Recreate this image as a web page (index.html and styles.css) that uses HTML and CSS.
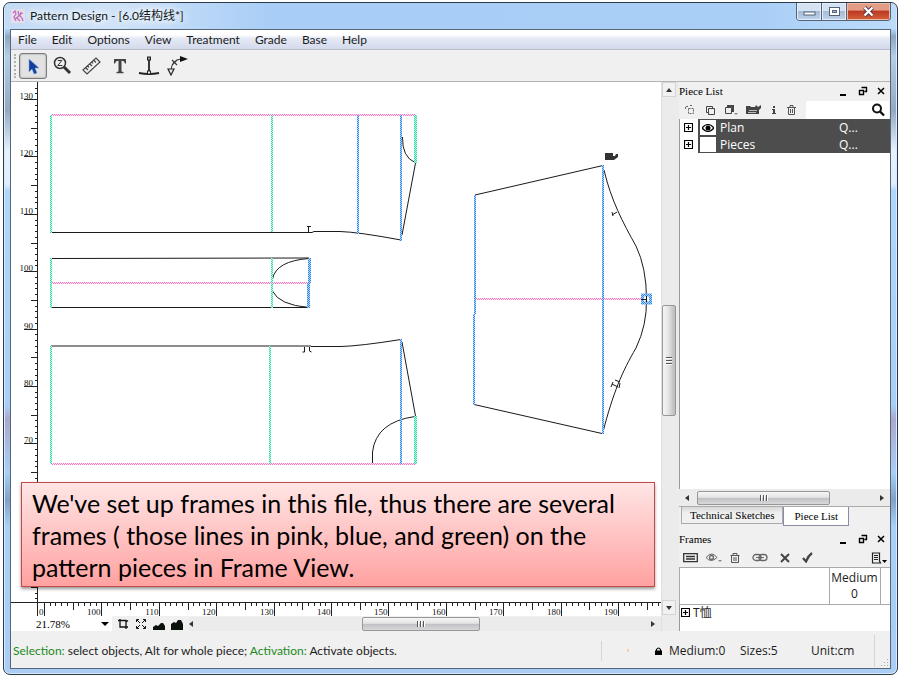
FILE: index.html
```html
<!DOCTYPE html>
<html lang="en">
<head>
<meta charset="utf-8">
<title>Pattern Design</title>
<link rel="stylesheet" href="styles.css">
</head>
<body>
<div class="window">
  <header class="titlebar">
    <svg class="app-icon" width="14" height="14" viewBox="0 0 14 14"><rect width="14" height="14" fill="#e6dfe9"/><path d="M2 4l2-2 1 3-2 3 2 4M7 2l1 4-2 3 3 3M10 3l-1 4 2 2 1 3M4 10l4-3M9 5l3-1" fill="none" stroke="#c071c0" stroke-width="1.300"/></svg>
    <h1 class="caption">Pattern Design - [6.0结构线*]</h1>
    <div class="window-buttons">
      <button class="wb" aria-label="Minimize"><svg width="13" height="10" viewBox="0 0 13 10"><rect x="1" y="5" width="11" height="3" fill="#fff" stroke="#53637a"/></svg></button>
      <button class="wb" aria-label="Maximize"><svg width="13" height="11" viewBox="0 0 13 11"><rect x="1.500" y="1.500" width="10" height="8" fill="#fff" stroke="#53637a"/><rect x="4.500" y="4.500" width="4" height="2" fill="#a9bed6" stroke="#53637a"/></svg></button>
      <button class="wb wb-close" aria-label="Close"><svg width="13" height="11" viewBox="0 0 13 11"><path d="M2.500 1.500l8 8M10.500 1.500l-8 8" stroke="#4b3440" stroke-width="4"/><path d="M2.500 1.500l8 8M10.500 1.500l-8 8" stroke="#fff" stroke-width="2.400"/></svg></button>
    </div>
  </header>

  <div class="client">
    <nav class="menubar">
      <button>File</button><button>Edit</button><button>Options</button><button>View</button><button>Treatment</button><button>Grade</button><button>Base</button><button>Help</button>
    </nav>

    <div class="toolbar">
      <span class="grip"></span>
      <button class="tool active" aria-label="Select"><svg width="20" height="20" viewBox="0 0 20 20"><path d="M6 3v13l3-3 2 5 3-1-2-5h4z" fill="#123f9c" stroke="#7fa3dc" stroke-width=".6"/></svg></button>
      <button class="tool" aria-label="Zoom"><svg width="20" height="20" viewBox="0 0 20 20"><circle cx="8" cy="7" r="5.500" fill="none" stroke="#333" stroke-width="1.500"/><path d="M5.800 4.500h4l-4 5h4.500" fill="none" stroke="#333"/><path d="M12 11l6 6" stroke="#333" stroke-width="3"/></svg></button>
      <button class="tool" aria-label="Measure"><svg width="20" height="20" viewBox="0 0 20 20"><path d="M2 14L15 2l4 4L6 18zM5 12l2 2M7 10l1 1.500M9 8l2 2M11 6l1 1.500M13 4.500l2 2" fill="none" stroke="#444" stroke-width="1.200"/></svg></button>
      <button class="tool" aria-label="Text"><svg width="20" height="20" viewBox="0 0 20 20"><path d="M4 3v4.500h1.200q.3-2.800 3.300-2.800V15.500L6.500 16v1.300h7V16l-2-.5V4.700q3 0 3.300 2.800H16V3z" fill="#444"/></svg></button>
      <button class="tool" aria-label="Perpendicular"><svg width="22" height="20" viewBox="0 0 22 20"><path d="M1 17q10 2 20 0" fill="none" stroke="#222" stroke-width="1.800"/><path d="M11 3v14" stroke="#222" stroke-width="1.800"/><rect x="9.500" y="1" width="3" height="3" fill="#999" stroke="#222"/><rect x="9.500" y="15" width="3" height="3" fill="#eee" stroke="#222"/></svg></button>
      <button class="tool" aria-label="Curve"><svg width="22" height="20" viewBox="0 0 22 20"><path d="M4 14Q5 4 14 3M5 4l5 5M10 4L5 9" fill="none" stroke="#333" stroke-width="1.100"/><path d="M13 0l8 3-8 3z" fill="#111"/><path d="M1 13h6l-3 6z" fill="#eee" stroke="#222" stroke-width="1.200"/></svg></button>
    </div>

    <main class="workspace">
      <section class="canvas-column">
        <div class="canvas">
          <svg class="drawing" width="100%" height="100%" aria-label="Pattern pieces">
            <defs>
              <pattern id="pink" width="2" height="2" patternUnits="userSpaceOnUse"><rect width="2" height="2" fill="#ffe6f5"/><path d="M0 0h1v1H0zM1 1h1v1H1z" fill="#ff78c4"/></pattern>
              <pattern id="blue" width="2" height="2" patternUnits="userSpaceOnUse"><rect width="2" height="2" fill="#b0d4fa"/><path d="M0 0h1v1H0zM1 1h1v1H1z" fill="#3488e4"/></pattern>
              <pattern id="green" width="2" height="2" patternUnits="userSpaceOnUse"><rect width="2" height="2" fill="#bcf9e4"/><path d="M0 0h1v1H0zM1 1h1v1H1z" fill="#36d8a6"/></pattern>
            </defs>
            <g transform="translate(-11 -82)">
              <g fill="url(#pink)">
                <rect x="51" y="114" width="365" height="2"/><rect x="52" y="282" width="257" height="2"/>
                <rect x="51" y="463" width="365" height="2"/><rect x="475" y="298" width="168" height="2"/>
              </g>
              <g class="seam">
                <path d="M51 232.500H312L314 231.500H340Q358 232 401 240M415.500 163L402 235M402.500 137Q402 157 415 162.500M308.500 227v6M307 226.500h4"/>
                <path d="M51 258.500L309 258M51 307.500H309M272.500 279Q276 261 309 258.500M272.500 291Q279 305 309 307.500"/>
                <path d="M51 346H311M311 346.500H341Q360 346 401 339.500M402 342L415.500 416M372.500 463V452Q376 422 415 416.500M304.500 347v5h-2M309.500 347v4l2 1"/>
                <path d="M475 195L603 165.500M474 404.500L602 433.500M604 170C611 200 623 223 636 246Q646.500 268 646.500 299Q647 325 636 348C622 372 613 393 603 432M612 215l5-3M612 212l1 4M612 384l6 3M615 380l5 2M611 387l2-5M619 388l1-5"/>
              </g>
              <g fill="url(#green)">
                <rect x="50" y="115" width="2" height="118"/><rect x="271" y="115" width="2" height="117"/><rect x="414" y="115" width="3" height="48"/>
                <rect x="50" y="258" width="2" height="50"/><rect x="271" y="258" width="2" height="50"/>
                <rect x="50" y="346" width="2" height="118"/><rect x="269" y="346" width="2" height="118"/><rect x="414" y="416" width="3" height="48"/>
              </g>
              <g fill="url(#blue)">
                <rect x="357" y="115" width="2" height="119"/><rect x="400" y="115" width="2" height="126"/>
                <rect x="308" y="258" width="3" height="25"/><rect x="307" y="283" width="3" height="25"/>
                <rect x="400" y="339" width="2" height="125"/>
                <rect x="474" y="195" width="2" height="119"/><rect x="473" y="314" width="2" height="91"/>
                <rect x="603" y="165" width="1" height="36"/><rect x="602" y="165" width="2" height="269"/>
              </g>
              <rect x="642.500" y="295" width="8" height="8" fill="#fff" stroke="url(#blue)" stroke-width="3"/>
              <path d="M641 299.500h5M646.500 296v6" stroke="#111" fill="none"/>
              <path d="M605 153h8v3h2l1-2h2v3l-4 3h-9z" fill="#333"/>
              <path id="ruler-ticks" class="ruler-line"/>
              <g id="ruler-labels" class="ruler-labels"></g>
            </g>
          </svg>
          <p class="callout">We've set up frames in this file, thus there are several frames ( those lines in pink, blue, and green) on the pattern pieces in Frame View.</p>
        </div>
        <div class="zoombar">
          <label class="zoom-field"><select aria-label="Zoom level"><option>21.78%</option></select><svg width="8" height="4" viewBox="0 0 8 4"><path d="M0 0h8L4 4z"/></svg></label>
          <button class="mini" aria-label="Fit"><svg width="12" height="12" viewBox="0 0 12 12"><path d="M1 2.500h8V11M3 1v8h8M9 4l2-1.500" fill="none" stroke="#111" stroke-width="1.300"/></svg></button>
          <button class="mini" aria-label="Full view"><svg width="12" height="12" viewBox="0 0 12 12"><path d="M1.500 4V1.500H4M8 1.500h2.500V4M10.500 8v2.500H8M4 10.500H1.500V8M2 2l3 3M10 2L7 5M10 10L7 7M2 10l3-3" fill="none" stroke="#111"/></svg></button>
          <button class="mini" aria-label="Zoom out"><svg width="12" height="12" viewBox="0 0 12 12"><path d="M0 12V9l3-2 2 1 3-3h2l2 3v4z" fill="#0b120b"/></svg></button>
          <button class="mini" aria-label="Zoom in"><svg width="12" height="12" viewBox="0 0 12 12"><path d="M0 12V6l3-2 2 1 2-3h3l2 4v6z" fill="#0b120b"/></svg></button>
          <div class="scroll-h">
            <svg class="arrow" width="4" height="6" viewBox="0 0 4 6"><path d="M4 0v6L0 3z"/></svg>
            <span class="track-before"></span><span class="thumb"><i></i></span><span class="track-after"></span>
            <svg class="arrow" width="4" height="6" viewBox="0 0 4 6"><path d="M0 0v6l4-3z"/></svg>
          </div>
        </div>
      </section>

      <div class="scroll-v">
        <span class="scroll-button"><svg width="6" height="4" viewBox="0 0 6 4"><path d="M0 4h6L3 0z"/></svg></span>
        <span class="track-before"></span><span class="thumb"><i></i></span><span class="track-after"></span>
        <span class="scroll-button"><svg width="6" height="4" viewBox="0 0 6 4"><path d="M0 0h6L3 4z"/></svg></span>
      </div>

      <aside class="docks">
        <section class="dock dock-pieces">
          <div class="dock-title"><h2>Piece List</h2>
            <svg width="48" height="11" viewBox="0 0 48 11" fill="none" stroke="#000" stroke-width="2"><path d="M2 9h6"/><path d="M21.500 4.500h4v4h-4zM23.500 1.500h5v4h-2" stroke-width="1.400"/><path d="M40 2l6 6M46 2l-6 6" stroke-width="1.500"/></svg>
          </div>
          <div class="dock-tools">
            <button aria-label="New piece"><svg width="12" height="12" viewBox="0 0 12 12"><path d="M4.500 4.500h5v5h-5zM1.500 5V2.500H4M6 1.500h3" fill="none" stroke="#666" stroke-dasharray="2 1"/></svg></button>
            <button aria-label="Copy"><svg width="12" height="12" viewBox="0 0 12 12"><path d="M4.500 4.500h6v6h-6zM4 8.500H2.500v-6h6V4" fill="none" stroke="#444"/></svg></button>
            <button aria-label="Group"><svg width="14" height="12" viewBox="0 0 14 12"><path d="M1.500 3.500h6v6h-6z" fill="#eee" stroke="#444"/><path d="M3 1h7v7H8V3H3z" fill="#444"/><path d="M10 9h4l-2 2z" fill="#888"/></svg></button>
            <button aria-label="Open"><svg width="16" height="12" viewBox="0 0 16 12"><path d="M0 10V2h4l1 1h4l1-2 2 2 3-2v3l-2 2v4z" fill="#444"/><path d="M3 6.500h8M2 8.500h8" stroke="#bbb"/></svg></button>
            <button aria-label="Information"><svg width="8" height="12" viewBox="0 0 8 12"><path d="M3 2h2v2H3zM2 5h3v4h1v1H2V9h1V6H2z" fill="#444"/></svg></button>
            <button aria-label="Delete"><svg width="12" height="12" viewBox="0 0 12 12"><path d="M1 3.500h9M4 3V1.500h3V3M2.500 4v6.500h6V4M4.500 5v4M6.500 5v4" fill="none" stroke="#555"/></svg></button>
            <label class="search"><input type="text" aria-label="Search pieces"><svg width="14" height="14" viewBox="0 0 14 14"><circle cx="6" cy="5.500" r="4" fill="none" stroke="#111" stroke-width="2"/><path d="M9 8.500l4 4" stroke="#111" stroke-width="2.400"/></svg></label>
          </div>
          <ul class="piece-list">
            <li><button class="expand" aria-label="Expand Plan"><svg width="9" height="9" viewBox="0 0 9 9"><path d="M.5.5h8v8h-8zM2 4.500h5M4.500 2v5" fill="none" stroke="#000" stroke-width="1.200"/></svg></button>
              <span class="entry"><span class="eye"><svg width="12" height="8" viewBox="0 0 12 8"><path d="M0 4q6-7 12 0-6 7-12 0z" fill="#fff" stroke="#000" stroke-width="1.200"/><circle cx="6" cy="4" r="2.500"/></svg></span><span class="name">Plan</span><span>Q...</span></span></li>
            <li><button class="expand" aria-label="Expand Pieces"><svg width="9" height="9" viewBox="0 0 9 9"><path d="M.5.5h8v8h-8zM2 4.500h5M4.500 2v5" fill="none" stroke="#000" stroke-width="1.200"/></svg></button>
              <span class="entry"><span class="eye"></span><span class="name">Pieces</span><span>Q...</span></span></li>
          </ul>
          <div class="scroll-h list-scroll">
            <svg class="arrow" width="4" height="6" viewBox="0 0 4 6"><path d="M4 0v6L0 3z"/></svg>
            <span class="thumb"><i></i></span><span class="track-after"></span>
            <svg class="arrow" width="4" height="6" viewBox="0 0 4 6"><path d="M0 0v6l4-3z"/></svg>
          </div>
          <div class="tabs" role="tablist"><button role="tab" aria-selected="false">Technical Sketches</button><button role="tab" aria-selected="true">Piece List</button></div>
        </section>

        <section class="dock">
          <div class="dock-title"><h2>Frames</h2>
            <svg width="48" height="11" viewBox="0 0 48 11" fill="none" stroke="#000" stroke-width="2"><path d="M2 9h6"/><path d="M21.500 4.500h4v4h-4zM23.500 1.500h5v4h-2" stroke-width="1.400"/><path d="M40 2l6 6M46 2l-6 6" stroke-width="1.500"/></svg>
          </div>
          <div class="dock-tools frame-tools">
            <button aria-label="Frame"><svg width="15" height="10" viewBox="0 0 15 10"><path d="M.7.700h13.600v8H.7zM3 3.500h9M3 6h9" fill="none" stroke="#333" stroke-width="1.300"/></svg></button>
            <button aria-label="Visibility"><svg width="16" height="10" viewBox="0 0 16 10"><path d="M0 4.500q6-7 11 0-6 6-11 0z" fill="none" stroke="#666"/><circle cx="5.500" cy="4.500" r="2" fill="#eee" stroke="#666" stroke-width="1.300"/><path d="M12 7h4l-2 2z" fill="#888"/></svg></button>
            <button aria-label="Delete frame"><svg width="10" height="12" viewBox="0 0 10 12"><path d="M.5 3.500h9M3 3V1.500h4V3M1.500 4v6.500h7V4M4 5v4M6 5v4" fill="none" stroke="#555"/></svg></button>
            <button aria-label="Link"><svg width="16" height="10" viewBox="0 0 16 10"><rect x="1" y="1.500" width="8" height="6" rx="3" fill="none" stroke="#666" stroke-width="1.300"/><rect x="7" y="1.500" width="8" height="6" rx="3" fill="none" stroke="#666" stroke-width="1.300"/><path d="M4 4.500h8" stroke="#666"/></svg></button>
            <button aria-label="Cancel"><svg width="10" height="10" viewBox="0 0 10 10"><path d="M1 1l8 8M9 1L1 9" stroke="#444" stroke-width="2"/></svg></button>
            <button aria-label="Apply"><svg width="11" height="11" viewBox="0 0 11 11"><path d="M1 6l3 3.500Q6 4 10 1" fill="none" stroke="#444" stroke-width="2.200"/></svg></button>
            <button class="options" aria-label="Options"><svg width="17" height="12" viewBox="0 0 17 12"><path d="M2.500 1v10h8l-1-2V1zM4 3.500h4M4 5.500h4M4 7.500h4" fill="none" stroke="#222" stroke-width="1.200"/><path d="M12 8h5l-2.500 3z"/></svg></button>
          </div>
          <table class="frames">
            <thead><tr><th></th><th class="size">Medium<br>0</th><th class="rest"></th></tr></thead>
            <tbody><tr><td colspan="3"><svg width="9" height="9" viewBox="0 0 9 9"><path d="M.5.5h8v8h-8zM2 4.500h5M4.500 2v5" fill="none" stroke="#000" stroke-width="1.200"/></svg> T恤</td></tr></tbody>
          </table>
        </section>
      </aside>
    </main>

    <footer class="statusbar">
      <span class="hint"><b>Selection:</b> select objects, Alt for whole piece; <b>Activation:</b> Activate objects.</span>
      <span class="progress"><i></i></span>
      <span class="base-size"><svg width="7" height="8" viewBox="0 0 7 8"><path d="M0 3.500h7V8H0z"/><path d="M1.500 4V2.500q2-3 4 0V4" fill="none" stroke="#000" stroke-width="1.200"/></svg>Medium:0</span>
      <span class="sizes">Sizes:5</span>
      <span class="unit">Unit:cm</span>
      <svg class="resize" width="9" height="9" viewBox="0 0 9 9"><path d="M7 1h1v1H7zM4 4h1v1H4zM7 4h1v1H7zM1 7h1v1H1zM4 7h1v1H4zM7 7h1v1H7z" fill="#aaa"/></svg>
    </footer>
  </div>
</div>
<script src="rulers.js"></script>
</body>
</html>
```
FILE: styles.css
```css
* { box-sizing: border-box; }
body {
  margin: 0;
  height: 100vh;
  padding: 2px 4px 1px 3px;
  background: #fff;
  color: #1c1c1c;
  font: 12px/16px "Open Sans", "Noto Sans CJK SC", sans-serif;
}
button { border: 0; padding: 0; background: none; font: inherit; color: inherit; }
h1, h2, p, ul { margin: 0; padding: 0; font: inherit; list-style: none; }
svg { display: block; flex: none; }

.window {
  height: 100%;
  display: flex;
  flex-direction: column;
  padding: 0 6px 5px;
  border: 1px solid #2d3a4a;
  border-radius: 7px;
  background: linear-gradient(#b0d2f7 0, #b0d2f7 4%, #8fa6c0 5%, #b4cee8 8%, #93a9c2 16%, #e6f1fd 22%, #dfeefd 27%, #b0d6fb 28%, #a9cff6 60%, #a9a9cc 62%, #a9cff6 70%, #7fa3c6 74%, #aad0f6 78%, #a9cdf4 100%);
  box-shadow: inset 0 0 0 1px #d9ebfc;
}
.titlebar {
  display: flex;
  height: 26px;
  flex: none;
  margin: 0 -5px;
  padding-left: 6px;
  border-radius: 6px 6px 0 0;
  background: linear-gradient(90deg, #c3dbf5 0, #d0e3f8 12%, #a8cdf6 30%, #aacff7 85%, #bcdcf9 100%);
}
.app-icon { margin-top: 6px; }
.caption {
  margin: 5px 0 0 5px;
  flex: 1;
  color: #101820;
  text-shadow: 0 0 6px #fff, 0 0 9px #fff, 0 0 12px #fff;
}
.caption, .menubar, .hint { font-family: Lato, "Noto Sans CJK SC", sans-serif; }
.window-buttons { display: flex; height: 18px; margin-right: 5px; border: 1px solid #53637a; border-top: 0; border-radius: 0 0 4px 4px; overflow: hidden; }
.wb {
  display: grid;
  place-items: center;
  width: 25px;
  border-right: 1px solid #53637a;
  background: linear-gradient(#d4e2f2 0 45%, #a6bcd6 50%, #bed4ec);
  box-shadow: inset 0 0 0 1px #e3eefa;
}
.wb-close { width: 43px; border: 0; background: linear-gradient(#e39c86 0 40%, #bd3a22 50%, #d4623c); box-shadow: inset 0 0 0 1px #f0b9a4; }

.client { flex: 1; min-height: 0; display: flex; flex-direction: column; border: 1px solid #56677b; background: #f0f0f0; }
.menubar {
  display: flex;
  gap: 15px;
  height: 20px;
  flex: none;
  align-items: center;
  padding-left: 7px;
  background: linear-gradient(#fff 0 25%, #e4e9f5 45%, #d4daec);
  border-bottom: 1px solid #b8bdca;
}
.toolbar { display: flex; gap: 1px; height: 32px; flex: none; align-items: center; padding-left: 3px; border-bottom: 1px solid #b5b5b5; }
.grip { height: 24px; margin-right: 2px; border-left: 2px dotted #b0b0b0; }
.tool { display: grid; place-items: center; width: 28px; height: 26px; }
.tool.active { border: 1px solid #7a7a7a; border-radius: 3px; background: #e2e2e2; box-shadow: inset 0 0 2px #888; }

.workspace { flex: 1; min-height: 0; display: flex; }
.canvas-column { flex: 1; min-width: 0; display: flex; flex-direction: column; }
.canvas { flex: 1; min-height: 0; position: relative; background: #fff; }
.drawing { position: absolute; inset: 0; }
.seam { fill: none; stroke: #1a1a1a; }
.ruler-line { fill: none; stroke: #222; shape-rendering: crispEdges; }
.ruler-labels { font: 9px "Liberation Serif", serif; text-anchor: end; fill: #111; }
.callout {
  position: absolute;
  left: 10px;
  right: 6px;
  bottom: 29px;
  padding: 4px 10px 3px;
  border: 1px solid #be4b48;
  background: linear-gradient(#ffe5e5, #ffa2a1);
  box-shadow: 0 2px 3px rgba(0, 0, 0, .4);
  color: #000;
  font: 25px/32px Lato, sans-serif;
}
.zoombar { display: flex; flex: none; height: 15px; align-items: center; gap: 6px; }
.zoom-field { display: flex; align-items: center; width: 101px; height: 100%; padding-right: 3px; background: #fff; }
.zoom-field select { flex: 1; min-width: 0; appearance: none; border: 0; padding: 0 0 0 25px; background: none; color: #000; font: 11px "Liberation Serif", serif; }
.mini { width: 12px; margin-left: -1px; }
.mini + .mini { margin-left: 0; }

.scroll-h, .scroll-v { display: flex; align-items: center; background: #ebebeb; fill: #333; }
.scroll-h { flex: 1; height: 14px; padding: 0 6px 0 0; }
.scroll-v { flex: none; width: 18px; flex-direction: column; padding-bottom: 16px; border-left: 1px solid #e0e0e0; }
.thumb { display: grid; place-items: center; border: 1px solid #979797; border-radius: 2px; }
.scroll-h .thumb { width: 118px; height: 14px; background: linear-gradient(#f6f6f6, #e4e4e4 45%, #bfc0c4 50%, #d8d8da); }
.scroll-v .thumb { width: 14px; height: 111px; margin-right: 3px; background: linear-gradient(90deg, #f6f6f6, #e4e4e4 45%, #bfc0c4 90%); }
.thumb i { width: 8px; height: 6px; background: repeating-linear-gradient(90deg, #555 0 1px, #fff 1px 2px, transparent 2px 3px); }
.scroll-v .thumb i { width: 6px; height: 8px; background: repeating-linear-gradient(#555 0 1px, #fff 1px 2px, transparent 2px 3px); }
.canvas-column .track-before { flex: 168; }
.canvas-column .track-after { flex: 170; }
.scroll-v .track-before { flex: 208; }
.scroll-v .track-after { flex: 184; }
.scroll-button { display: grid; place-items: center; width: 14px; height: 15px; margin-right: 3px; border: 1px solid #d4d4d4; background: #f1f1f1; }

.docks { flex: none; width: 211px; display: flex; flex-direction: column; }
.dock { display: flex; flex-direction: column; }
.dock-pieces { flex: 1; min-height: 0; }
.dock-title { display: flex; height: 18px; align-items: center; justify-content: space-between; padding-right: 4px; color: #000; font: 11px/16px "Liberation Serif", serif; }
.dock-tools { display: flex; height: 19px; align-items: center; gap: 8px; padding-left: 5px; }
.search { display: flex; align-items: center; flex: 1; min-width: 0; height: 18px; margin-right: 1px; padding-right: 4px; background: #fff; }
.search input { flex: 1; min-width: 0; width: 0; height: 16px; padding: 0; border: 0; background: none; }
.piece-list { flex: 1; border-left: 1px solid #999; background: #fff; color: #fff; line-height: 17px; }
.piece-list li { display: flex; height: 17px; }
.expand { width: 18px; padding-left: 4px; }
.entry { flex: 1; display: grid; grid-template-columns: 16px 1fr 51px; align-items: center; column-gap: 4px; padding-left: 2px; background: #4d4d4d; }
.eye { display: grid; place-items: center; height: 15px; background: #fff; }
.list-scroll { flex: none; height: 17px; padding: 0 6px; }
.list-scroll .thumb { width: 133px; margin-left: 8px; }
.list-scroll .track-after { flex: 1; }
.tabs { display: flex; align-items: flex-start; height: 24px; padding-left: 2px; border-top: 1px solid #aaa; color: #000; font: 11px/16px "Liberation Serif", serif; }
.tabs button { height: 17px; padding: 0 8px; border: 1px solid #aaa; border-top: 0; background: linear-gradient(#d8d8d8, #f0f0f0 40%); }
.tabs button[aria-selected="true"] { height: 19px; padding: 0 10px; border-color: #8b8ba5; background: #fff; }
.frame-tools { gap: 12px; padding-left: 4px; }
.frame-tools button:nth-child(-n+2) { margin-right: -4px; }
.frame-tools .options { margin-left: auto; padding-right: 3px; }
.frames { width: 100%; height: 64px; border-collapse: collapse; border-left: 1px solid #999; background: #fff; }
.frames th { height: 37px; padding: 2px 0; border: 1px solid #aaa; font-weight: normal; }
.frames .size { width: 51px; }
.frames .rest { width: 10px; border-right: 0; }
.frames td { padding: 0 1px; vertical-align: top; }
.frames td svg { display: inline-block; }

.statusbar { display: flex; flex: none; height: 37px; align-items: center; padding: 2px 0 0 2px; background: #f0f0f0; }
.hint { flex: 1; }
.hint b { font-weight: normal; color: #1c8a1c; }
.progress { height: 20px; width: 54px; padding: 8px 25px; border-left: 1px solid #d5d5d5; }
.progress i { display: block; width: 2px; height: 3px; background: #f2d3a0; }
.base-size { display: flex; align-items: center; gap: 7px; width: 85px; }
.sizes { width: 71px; }
.unit { width: 64px; line-height: 32px; border-right: 1px solid #d5d5d5; }
.resize { align-self: flex-end; margin: 0 1px 1px 5px; }
```
FILE: rulers.js
```
// Draws both rulers: one tick per centimetre, a longer one every 5 and a label every 10.
const CM = 5.74;
const AXIS_X = 37.5;
const AXIS_Y = 602.5;
const ticks = [`M${AXIS_X} 82V616M10 ${AXIS_Y}H662`];
const labels = document.getElementById("ruler-labels");

function label(x, y, value) {
  const text = document.createElementNS("http://www.w3.org/2000/svg", "text");
  text.setAttribute("x", x);
  text.setAttribute("y", y);
  text.textContent = value;
  labels.append(text);
}
function tickLength(value) {
  return value % 10 === 0 ? 14 : value % 5 === 0 ? 7 : 3;
}
for (let value = 43; value <= 132; value++) {
  const y = Math.round(99 + (130 - value) * CM) + 0.5;
  ticks.push(`M${AXIS_X} ${y}h${-tickLength(value)}`);
  if (value % 10 === 0) label(33, Math.floor(y), value);
}
for (let value = 90; value <= 197; value++) {
  const x = Math.round(44 + (value - 90) * CM) + 0.5;
  ticks.push(`M${x} ${AXIS_Y}v${tickLength(value)}`);
  if (value % 10 === 0) label(x - 1, 615, value === 90 ? "0" : value);
}
document.getElementById("ruler-ticks").setAttribute("d", ticks.join(""));
```
